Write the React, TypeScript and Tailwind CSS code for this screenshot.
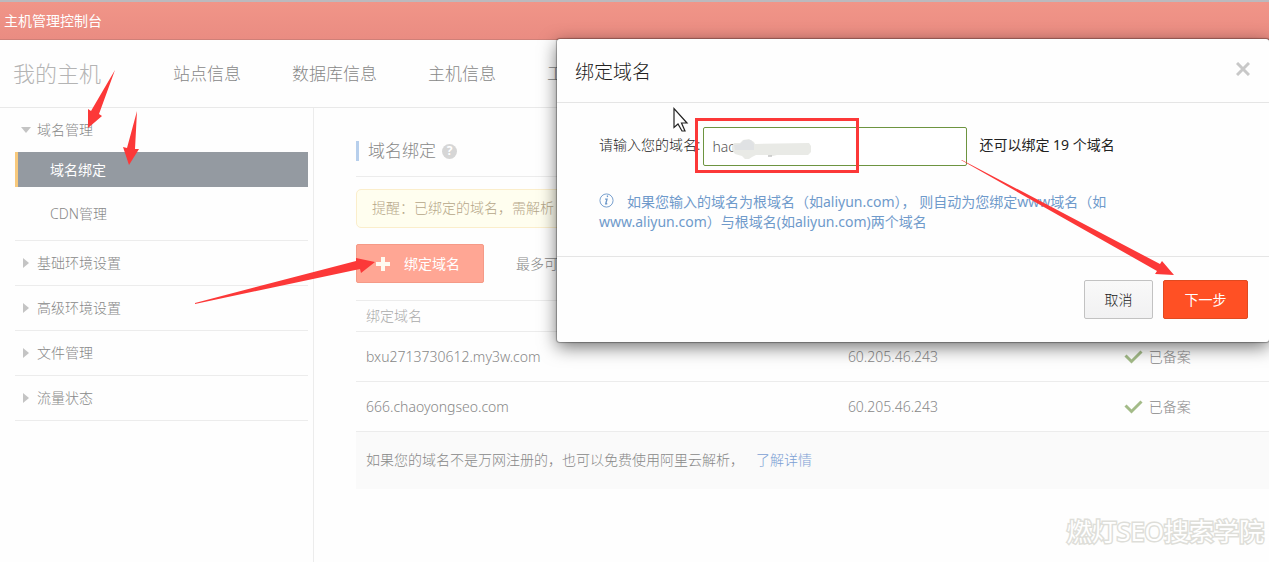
import { useState } from "react";

interface DomainRow {
  domain: string;
  ip: string;
  status: string;
}

const NAV_ITEMS = ["站点信息", "数据库信息", "主机信息", "工"];

const DOMAIN_CHILDREN = ["域名绑定", "CDN管理"];

const SIDE_GROUPS = ["基础环境设置", "高级环境设置", "文件管理", "流量状态"];

const DOMAINS: DomainRow[] = [
  { domain: "bxu2713730612.my3w.com", ip: "60.205.46.243", status: "已备案" },
  { domain: "666.chaoyongseo.com", ip: "60.205.46.243", status: "已备案" },
];

function Caret({ open = false }: { open?: boolean }) {
  return (
    <svg viewBox="0 0 10 10" className="size-[10px] shrink-0 fill-[#c4c4c4]" aria-hidden="true">
      {open ? <path d="M0 2h10L5 8z" /> : <path d="M2 0v10L8 5z" />}
    </svg>
  );
}

function Tick() {
  return (
    <svg viewBox="0 0 19 15" className="h-[15px] w-[19px] shrink-0" fill="none" aria-hidden="true">
      <path d="M1.5 6.5l6 6L17.500 2.500" stroke="#a3bb88" strokeWidth="3" />
    </svg>
  );
}

function TopBar() {
  return (
    <header className="flex h-10 items-center border-t-2 border-b border-t-[#bcb9bd] border-b-[#cf8078] bg-linear-to-b from-[#f19588] to-[#ea8c82] px-1">
      <h1 className="text-sm font-normal text-white">主机管理控制台</h1>
    </header>
  );
}

function MainNav() {
  return (
    <nav className="flex h-[68px] items-center overflow-hidden border-b border-[#e9e9e9] pl-[13px] whitespace-nowrap">
      <span className="w-40 shrink-0 text-[22px] text-[#b4b4b4]">我的主机</span>
      <ul className="flex gap-[51px] text-[17px] text-[#888]">
        {NAV_ITEMS.map((item) => (
          <li key={item}>
            <a href="#">{item}</a>
          </li>
        ))}
      </ul>
    </nav>
  );
}

function Sidebar() {
  const [selected, setSelected] = useState(DOMAIN_CHILDREN[0]);

  return (
    <aside className="w-[314px] shrink-0 border-r border-[#ececec] pr-[5px] pl-[15px] text-sm text-[#888]">
      <div className="border-b border-[#ececec]">
        <button className="flex h-11 w-full items-center gap-[6px] pl-[6px] text-left" aria-expanded="true">
          <Caret open />
          域名管理
        </button>
        <ul>
          {DOMAIN_CHILDREN.map((item) => (
            <li key={item} className="mb-[9px]">
              <button
                aria-pressed={item === selected}
                onClick={() => setSelected(item)}
                className={
                  item === selected
                    ? "h-[35px] w-full border-l-[3px] border-[#f8c97c] bg-[#949aa1] pl-8 text-left font-normal text-white"
                    : "h-[35px] w-full border-l-[3px] border-transparent pl-8 text-left"
                }
              >
                {item}
              </button>
            </li>
          ))}
        </ul>
      </div>

      {SIDE_GROUPS.map((group) => (
        <div key={group} className="border-b border-[#ececec]">
          <button className="flex h-11 w-full items-center gap-[6px] pl-[6px] text-left" aria-expanded="false">
            <Caret />
            {group}
          </button>
        </div>
      ))}
    </aside>
  );
}

function DomainTable() {
  return (
    <table className="mt-[17px] w-full table-fixed border-t border-[#ececec] text-left text-sm text-[#888]">
      <thead>
        <tr className="h-[31px] border-b border-[#ececec] text-[#aaa]">
          <th className="w-[53%] pl-[10px] font-light">绑定域名</th>
          <th className="w-[30%]" />
          <th />
        </tr>
      </thead>
      <tbody>
        {DOMAINS.map((row) => (
          <tr key={row.domain} className="h-[50px] border-b border-[#ececec]">
            <td className="pl-[10px]">{row.domain}</td>
            <td className="pl-2">{row.ip}</td>
            <td className="pl-[10px]">
              <span className="flex items-center gap-[6px]">
                <Tick />
                {row.status}
              </span>
            </td>
          </tr>
        ))}
      </tbody>
      <tfoot>
        <tr className="h-[57px] bg-[#fafafa]">
          <td colSpan={3} className="pl-[10px]">
            如果您的域名不是万网注册的，也可以免费使用阿里云解析，
            <a href="#" className="ml-3 text-[#7c9fd4]">
              了解详情
            </a>
          </td>
        </tr>
      </tfoot>
    </table>
  );
}

function DomainPanel() {
  return (
    <main className="min-w-0 flex-1 pt-[33px] pl-[42px]">
      <div className="flex items-center gap-[6px] border-b border-[#ececec] pb-[15px]">
        <h2 className="border-l-[3px] border-[#b7cfec] pl-[9px] text-[17px] leading-5 text-[#888]">域名绑定</h2>
        <button
          aria-label="帮助"
          className="flex size-[15px] items-center justify-center rounded-full bg-[#d6d6d6] text-xs font-bold text-white"
        >
          ?
        </button>
      </div>

      <p className="mt-3 h-[39px] rounded-[5px] border border-[#fbeecb] bg-[#fffeef] pl-[15px] text-sm leading-9 text-[#b5a688]">
        提醒：已绑定的域名，需解析
      </p>

      <div className="mt-4 flex items-center gap-8 text-sm">
        <button className="flex h-[39px] w-32 items-center gap-[14px] rounded-[2px] border border-[#f59a87] bg-[#ffa694] pl-[19px] font-normal text-white">
          <svg viewBox="0 0 14 14" className="size-[14px]" aria-hidden="true">
            <path d="M5 0h4v5h5v4H9v5H5V9H0V5h5z" fill="#fffaf0" />
          </svg>
          绑定域名
        </button>
        <span className="text-[#888]">最多可</span>
      </div>

      <DomainTable />
    </main>
  );
}

function BindDialog() {
  const [domain, setDomain] = useState("hao");

  return (
    <section
      role="dialog"
      aria-labelledby="bind-title"
      className="absolute top-[39px] right-0 left-[557px] rounded-[3px] bg-[#fefefe] text-sm text-[#222] shadow-[0_0_1px_1px_rgba(0,0,0,0.3),0_5px_18px_rgba(0,0,0,0.55)]"
    >
      <div className="flex h-16 items-center justify-between border-b border-[#e5e5e5] pr-[19px] pl-[18px]">
        <h2 id="bind-title" className="pt-1 text-[19px]">
          绑定域名
        </h2>
        <button aria-label="关闭" className="pb-1">
          <svg viewBox="0 0 14 14" className="size-[14px]" aria-hidden="true">
            <path d="M1 1l12 12M13 1L1 13" stroke="#c8c8c8" strokeWidth="3" />
          </svg>
        </button>
      </div>

      <div className="border-b border-[#e5e5e5] px-[42px] py-6">
        <div className="flex items-center">
          <label htmlFor="domain" className="pb-1">
            请输入您的域名:
          </label>
          <div className="relative ml-[3px]">
            <input
              id="domain"
              type="text"
              value={domain}
              onChange={(e) => setDomain(e.target.value)}
              className="block h-[39px] w-[264px] rounded-[2px] border border-[#6d9440] bg-white pl-2 text-[#555] outline-none"
            />
            {/* smudge that hides the rest of the typed domain */}
            <svg
              viewBox="0 0 80 22"
              className="pointer-events-none absolute top-[11px] left-[28px] h-[22px] w-20"
              aria-hidden="true"
            >
              <path
                d="M1 8l2-3h6l3-3 6-1 5 3 1 2 54-1 2 3v6l-3 3H46l-4 1-6-1H25l-4 2-3 2h-4l-3-3-7-2-3-4z"
                fill="#e9eae6"
              />
              <path d="M3 7l6-1 4-4h7l3 4v6H4z" fill="#e0e2e4" />
              <path d="M37 18h4" stroke="#aaa" />
            </svg>
          </div>
          <span className="ml-3 pb-1 font-normal">还可以绑定 19 个域名</span>
        </div>

        <p className="mt-[26px] max-w-[560px] leading-5 font-normal text-[#6f9acb]">
          <svg
            viewBox="0 0 16 16"
            className="mr-[13px] inline size-[15px] align-[-1px]"
            fill="none"
            stroke="#6f9acb"
            aria-hidden="true"
          >
            <circle cx="8" cy="8" r="7" />
            <path d="M6.500 6.500h2l-1.300 5h1.600" strokeWidth="1.500" />
            <path d="M8.300 3.500h1.400" strokeWidth="1.800" />
          </svg>
          如果您输入的域名为根域名（如aliyun.com）， 则自动为您绑定www域名（如www.aliyun.com）与根域名(如aliyun.com)两个域名
        </p>
      </div>

      <div className="flex h-[85px] items-center justify-end gap-[10px] pr-[21px]">
        <button className="h-[39px] w-[69px] rounded-[2px] border border-[#c2c2c2] bg-linear-to-b from-[#f9f9f9] to-[#f1f1f2]">
          取消
        </button>
        <button className="h-[39px] w-[85px] rounded-[2px] border border-[#e04a20] bg-[#ff5024] font-normal text-white">
          下一步
        </button>
      </div>
    </section>
  );
}

// Tutorial marks drawn over the page: arrows, highlight box and the mouse pointer
function Annotations() {
  return (
    <svg
      viewBox="0 0 1269 562"
      className="pointer-events-none absolute top-0 left-0 h-[562px] w-[1269px] max-w-none"
      aria-hidden="true"
    >
      <g fill="#fc3838">
        <path d="M115 70L99 114l3 2-14 12V109l3 2z" />
        <path d="M137 111L135 149h4l-10 16-6-18 4 1z" />
        <path d="M195 304v-1L356 261v-3l19 4-14 11-1-4z" />
        <path d="M961 160h1l198 104 2-3 12 14-19-1 2-3z" />
      </g>
      <rect x="696.500" y="119.500" width="161" height="52" fill="none" stroke="#fc3838" strokeWidth="3" />
      <path
        d="M674 108.500v19l4-3.500 4 7h3l-3.500-8h5.500z"
        fill="#fff"
        stroke="#222"
        strokeWidth="1.200"
      />
    </svg>
  );
}

export default function App() {
  return (
    <div className="relative flex min-h-screen flex-col overflow-hidden bg-[#fefefe] font-['Noto_Sans','Noto_Sans_CJK_SC',sans-serif] font-light">
      <TopBar />
      <MainNav />
      <div className="flex flex-1">
        <Sidebar />
        <DomainPanel />
      </div>
      <BindDialog />
      <Annotations />
      <p className="absolute right-[5px] bottom-3 text-[25px] font-normal text-white [-webkit-text-stroke:3px_#deded9] [paint-order:stroke_fill]">
        燃灯SEO搜索学院
      </p>
    </div>
  );
}
